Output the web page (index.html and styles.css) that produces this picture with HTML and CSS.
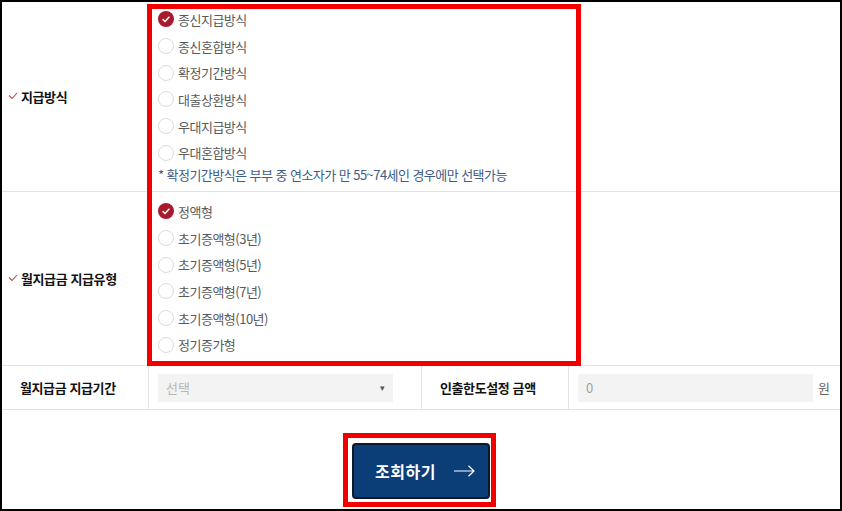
FILE: index.html
```html
<!DOCTYPE html>
<html lang="ko">
<head>
    <meta charset="UTF-8">
    <title>지급방식 선택</title>
    <link rel="stylesheet" href="styles.css">
</head>
<body>
    <div class="frame">
        <!-- 지급방식 -->
        <div class="row row-pay">
            <div class="label req">
                <svg class="req-mark" width="10" height="8" viewBox="0 0 10 8"><polyline points="1,3.5 4,6.5 9,1" fill="none" stroke="#c8414f" stroke-width="1.1"/></svg>
                지급방식
            </div>
            <div class="cell">
                <ul class="radios">
                    <li class="on"><span class="dot"><svg width="16" height="16" viewBox="0 0 16 16"><circle cx="8" cy="8" r="8" fill="#a81a2e"/><polyline points="4.6,8.2 7,10.4 11.4,5.8" fill="none" stroke="#fff" stroke-width="1.5"/></svg></span>종신지급방식</li>
                    <li><span class="dot"></span>종신혼합방식</li>
                    <li><span class="dot"></span>확정기간방식</li>
                    <li><span class="dot"></span>대출상환방식</li>
                    <li><span class="dot"></span>우대지급방식</li>
                    <li><span class="dot"></span>우대혼합방식</li>
                </ul>
                <p class="note">* 확정기간방식은 부부 중 연소자가 만 55~74세인 경우에만 선택가능</p>
            </div>
        </div>

        <!-- 월지급금 지급유형 -->
        <div class="row row-type">
            <div class="label req">
                <svg class="req-mark" width="10" height="8" viewBox="0 0 10 8"><polyline points="1,3.5 4,6.5 9,1" fill="none" stroke="#c8414f" stroke-width="1.1"/></svg>
                월지급금 지급유형
            </div>
            <div class="cell">
                <ul class="radios">
                    <li class="on"><span class="dot"><svg width="16" height="16" viewBox="0 0 16 16"><circle cx="8" cy="8" r="8" fill="#a81a2e"/><polyline points="4.6,8.2 7,10.4 11.4,5.8" fill="none" stroke="#fff" stroke-width="1.5"/></svg></span>정액형</li>
                    <li><span class="dot"></span>초기증액형(3년)</li>
                    <li><span class="dot"></span>초기증액형(5년)</li>
                    <li><span class="dot"></span>초기증액형(7년)</li>
                    <li><span class="dot"></span>초기증액형(10년)</li>
                    <li><span class="dot"></span>정기증가형</li>
                </ul>
            </div>
        </div>

        <!-- 지급기간 / 인출한도 -->
        <div class="row row-period">
            <div class="label">월지급금 지급기간</div>
            <div class="cell field">
                <div class="select">선택<span class="caret">▾</span></div>
            </div>
            <div class="label">인출한도설정 금액</div>
            <div class="cell field">
                <div class="input">0</div>
                <span class="unit">원</span>
            </div>
        </div>

        <div class="actions">
            <button class="btn-search">조회하기
                <svg width="21" height="12" viewBox="0 0 21 12"><path d="M0 6H20M14.5 0.8L20 6L14.5 11.2" fill="none" stroke="#fff" stroke-width="1.2"/></svg>
            </button>
        </div>

        <!-- 강조 표시 -->
        <div class="mark mark-options"></div>
        <div class="mark mark-button"></div>
    </div>
</body>
</html>
```

FILE: styles.css
```css
* { box-sizing: border-box; }
body { margin: 0; font-family: "Noto Sans CJK KR", "Noto Sans", sans-serif; color: #333; }
.frame { position: relative; width: 842px; height: 511px; border: 2px solid #000; background: #fff; overflow: hidden; }

.row { display: grid; grid-template-columns: 147px 1fr; border-bottom: 1px solid #e3e3e3; }
.row-pay { height: 190px; }
.row-type { height: 174px; }
.row-period { height: 44px; grid-template-columns: 147px 273px 147px 1fr; }

.label { display: flex; align-items: center; padding-left: 19px; border-right: 1px solid #e3e3e3; font-size: 13px; font-weight: bold; color: #111; letter-spacing: -0.4px; position: relative; }
.req-mark { position: absolute; left: 6px; top: 50%; margin-top: -5px; }
.row-period .label { padding-left: 18px; }

.cell { padding-left: 9px; }
.row-pay .cell { padding-top: 4px; }
.row-type .cell { padding-top: 6px; }

.radios { list-style: none; margin: 0; padding: 0; }
.radios li { display: flex; align-items: center; height: 26.7px; font-size: 13px; color: #5a5a5a; letter-spacing: -0.5px; }
.dot { width: 16px; height: 16px; border: 1px solid #dcdcdc; border-radius: 50%; margin-right: 4px; flex: none; }
.radios li.on .dot { border: none; }
.dot svg { display: block; }
.note { margin: 0; padding-top: 2px; font-size: 13px; line-height: 14px; color: #3e5b86; letter-spacing: -0.55px; }

.field { display: flex; align-items: center; border-right: 1px solid #e3e3e3; }
.field:last-child { border-right: none; }
.select, .input { width: 235px; height: 28px; background: #f3f3f3; display: flex; align-items: center; padding: 0 8px; font-size: 13px; color: #b8b8b8; }
.select { justify-content: space-between; }
.caret { font-size: 9px; color: #555; }
.input { color: #a0a0a0; }
.unit { margin-left: 5px; font-size: 13px; color: #666; }

.actions { display: flex; justify-content: center; padding-top: 33px; }
.btn-search { display: flex; align-items: center; gap: 18px; width: 138px; height: 56px; padding: 0 0 0 21px; background: #0b3d76; border: 2px solid #0d1a2c; border-radius: 4px; color: #fff; font-family: inherit; font-size: 16px; font-weight: bold; letter-spacing: 0.5px; }

.mark { position: absolute; border: 5px solid #f20000; }
.mark-options { left: 145px; top: 2px; width: 434px; height: 362px; }
.mark-button { left: 341px; top: 431px; width: 153px; height: 74px; }
```
